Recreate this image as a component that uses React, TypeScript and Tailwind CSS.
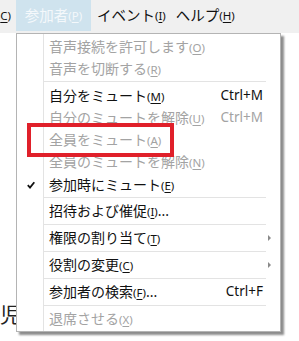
import { ReactNode } from "react";

type MenuItemProps = {
  label: string;
  mnemonic: string;
  suffix?: string;
  shortcut?: string;
  disabled?: boolean;
  checked?: boolean;
  submenu?: boolean;
  height: string;
};

// 下線付きのアクセスキー (M) など
const Mnemonic = ({ k }: { k: string }) => (
  <span className="text-[11.5px]">
    (<span className="underline underline-offset-2">{k}</span>)
  </span>
);

const MenuItem = ({
  label,
  mnemonic,
  suffix,
  shortcut,
  disabled,
  checked,
  submenu,
  height,
}: MenuItemProps) => (
  <div
    className={`relative flex items-center pl-[32px] pr-[17px] ${height} ${
      disabled ? "text-[#a3a3a3]" : "text-[#111]"
    }`}
  >
    {checked && (
      <svg
        className="absolute left-[10px] top-1/2 -translate-y-1/2"
        width="8"
        height="8"
        viewBox="0 0 8 8"
      >
        <path d="M0.8 4.2 L3 6.6 L7.3 1.2" stroke="#111" strokeWidth="1.8" fill="none" />
      </svg>
    )}
    <span className="flex-1 whitespace-nowrap">
      {label}
      <Mnemonic k={mnemonic} />
      {suffix}
    </span>
    {shortcut && <span className="whitespace-nowrap text-[13.5px]">{shortcut}</span>}
    {submenu && (
      <span className="absolute right-[9px] top-1/2 -translate-y-1/2 w-0 h-0 border-y-[3px] border-y-transparent border-l-[3px] border-l-[#8a8a8a]" />
    )}
  </div>
);

const Separator = ({ className }: { className?: string }) => (
  <div className={`ml-[27px] mr-[14px] h-px bg-[#e3e3e3] ${className ?? ""}`} />
);

const BarItem = ({ children, className }: { children: ReactNode; className?: string }) => (
  <div className={`flex items-center whitespace-nowrap ${className ?? ""}`}>{children}</div>
);

export default function App() {
  return (
    <div className="relative w-[299px] h-[341px] overflow-hidden bg-white font-['Noto_Sans','Noto_Sans_CJK_JP',sans-serif] text-[14px] leading-none">
      {/* メニューバー */}
      <div className="flex h-[33px] bg-[#f0f0f0] text-[#111]">
        <div className="w-[16px] overflow-hidden flex justify-end items-center h-[31px]">
          <span className="text-[11.5px] pr-[5px]">
            <span className="underline underline-offset-2">C</span>)
          </span>
        </div>
        <BarItem className="w-[75px] h-[31px] justify-center bg-[#cfe3ee] text-[#f4f8fb] text-[14.5px]">
          参加者<Mnemonic k="P" />
        </BarItem>
        <BarItem className="h-[31px] pl-[6px] text-[14.5px]">
          イベント<Mnemonic k="I" />
        </BarItem>
        <BarItem className="h-[31px] pl-[10px] text-[14.5px]">
          ヘルプ<Mnemonic k="H" />
        </BarItem>
      </div>

      {/* 背景の本文 */}
      <div className="pt-[272px] font-['Liberation_Serif','Noto_Sans_CJK_JP',serif] text-[21px] text-[#222]">
        児の
      </div>

      {/* ドロップダウン */}
      <div className="absolute left-[16px] top-[33px] w-[265px] border border-[#b4b4b4] bg-white shadow-[3px_3px_2px_rgba(0,0,0,0.45)]">
        <div className="absolute left-[26px] top-0 bottom-0 w-px bg-[#e3e3e3]" />
        <div className="relative pt-[2px]">
          <MenuItem label="音声接続を許可します" mnemonic="O" disabled height="h-[22px]" />
          <MenuItem label="音声を切断する" mnemonic="R" disabled height="h-[22px]" />
          <Separator className="mt-[1px] mb-[3px]" />
          <MenuItem label="自分をミュート" mnemonic="M" shortcut="Ctrl+M" height="h-[22px]" />
          <MenuItem label="自分のミュートを解除" mnemonic="U" shortcut="Ctrl+M" disabled height="h-[22px]" />
          <MenuItem label="全員をミュート" mnemonic="A" disabled height="h-[22px]" />
          <MenuItem label="全員のミュートを解除" mnemonic="N" disabled height="h-[22px]" />
          <MenuItem label="参加時にミュート" mnemonic="E" checked height="h-[24px]" />
          <Separator />
          <MenuItem label="招待および催促" mnemonic="I" suffix="..." height="h-[26px]" />
          <Separator />
          <MenuItem label="権限の割り当て" mnemonic="T" submenu height="h-[26px]" />
          <Separator />
          <MenuItem label="役割の変更" mnemonic="C" submenu height="h-[26px]" />
          <Separator />
          <MenuItem label="参加者の検索" mnemonic="F" suffix="..." shortcut="Ctrl+F" height="h-[26px]" />
          <Separator />
          <MenuItem label="退席させる" mnemonic="X" disabled height="h-[25px]" />
        </div>
      </div>

      {/* 赤枠 */}
      <div className="absolute left-[27px] top-[123px] w-[147px] h-[34px] border-4 border-[#e0202a]" />
    </div>
  );
}
